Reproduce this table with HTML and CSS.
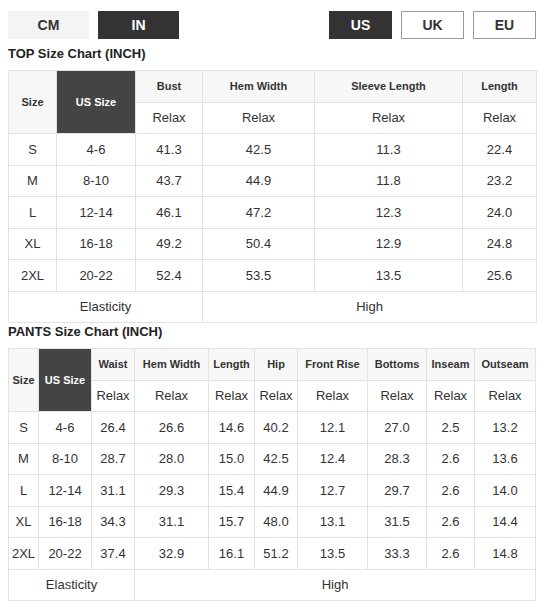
FILE: index.html
```html
<!DOCTYPE html>
<html lang="en">
<head>
    <meta charset="UTF-8" />
    <meta name="viewport" content="width=device-width, initial-scale=1" />
    <title>Size Chart</title>
    <link rel="stylesheet" href="styles.css">
</head>
<body>
    <div class="chart">
        <div class="toolbar">
            <div class="group">
                <button class="unit">CM</button>
                <button class="unit active">IN</button>
            </div>
            <div class="group">
                <button class="region active">US</button>
                <button class="region">UK</button>
                <button class="region">EU</button>
            </div>
        </div>

        <h3 class="chart-title first">TOP Size Chart (INCH)</h3>
        <table class="size-table top-table">
            <colgroup>
                <col style="width:48px"><col style="width:79px"><col style="width:67px">
                <col style="width:112px"><col style="width:148px"><col style="width:74px">
            </colgroup>
            <thead>
                <tr>
                    <th rowspan="2">Size</th>
                    <th rowspan="2" class="us">US Size</th>
                    <th>Bust</th>
                    <th>Hem Width</th>
                    <th>Sleeve Length</th>
                    <th>Length</th>
                </tr>
                <tr>
                    <td>Relax</td><td>Relax</td><td>Relax</td><td>Relax</td>
                </tr>
            </thead>
            <tbody>
                <tr><td>S</td><td>4-6</td><td>41.3</td><td>42.5</td><td>11.3</td><td>22.4</td></tr>
                <tr><td>M</td><td>8-10</td><td>43.7</td><td>44.9</td><td>11.8</td><td>23.2</td></tr>
                <tr><td>L</td><td>12-14</td><td>46.1</td><td>47.2</td><td>12.3</td><td>24.0</td></tr>
                <tr><td>XL</td><td>16-18</td><td>49.2</td><td>50.4</td><td>12.9</td><td>24.8</td></tr>
                <tr><td>2XL</td><td>20-22</td><td>52.4</td><td>53.5</td><td>13.5</td><td>25.6</td></tr>
                <tr><td colspan="3">Elasticity</td><td colspan="3">High</td></tr>
            </tbody>
        </table>

        <h3 class="chart-title">PANTS Size Chart (INCH)</h3>
        <table class="size-table pants-table">
            <colgroup>
                <col style="width:30px"><col style="width:53px"><col style="width:43px">
                <col style="width:74px"><col style="width:46px"><col style="width:43px">
                <col style="width:70px"><col style="width:59px"><col style="width:48px">
                <col style="width:61px">
            </colgroup>
            <thead>
                <tr>
                    <th rowspan="2">Size</th>
                    <th rowspan="2" class="us">US Size</th>
                    <th>Waist</th>
                    <th>Hem Width</th>
                    <th>Length</th>
                    <th>Hip</th>
                    <th>Front Rise</th>
                    <th>Bottoms</th>
                    <th>Inseam</th>
                    <th>Outseam</th>
                </tr>
                <tr>
                    <td>Relax</td><td>Relax</td><td>Relax</td><td>Relax</td>
                    <td>Relax</td><td>Relax</td><td>Relax</td><td>Relax</td>
                </tr>
            </thead>
            <tbody>
                <tr><td>S</td><td>4-6</td><td>26.4</td><td>26.6</td><td>14.6</td><td>40.2</td><td>12.1</td><td>27.0</td><td>2.5</td><td>13.2</td></tr>
                <tr><td>M</td><td>8-10</td><td>28.7</td><td>28.0</td><td>15.0</td><td>42.5</td><td>12.4</td><td>28.3</td><td>2.6</td><td>13.6</td></tr>
                <tr><td>L</td><td>12-14</td><td>31.1</td><td>29.3</td><td>15.4</td><td>44.9</td><td>12.7</td><td>29.7</td><td>2.6</td><td>14.0</td></tr>
                <tr><td>XL</td><td>16-18</td><td>34.3</td><td>31.1</td><td>15.7</td><td>48.0</td><td>13.1</td><td>31.5</td><td>2.6</td><td>14.4</td></tr>
                <tr><td>2XL</td><td>20-22</td><td>37.4</td><td>32.9</td><td>16.1</td><td>51.2</td><td>13.5</td><td>33.3</td><td>2.6</td><td>14.8</td></tr>
                <tr><td colspan="3">Elasticity</td><td colspan="7">High</td></tr>
            </tbody>
        </table>
    </div>
</body>
</html>
```

FILE: styles.css
```css
body {
    margin: 8px;
    font-family: "Liberation Sans", Arial, sans-serif;
    color: #333;
    background: #fff;
}
.chart {
    width: 528px;
    padding-top: 3px;
}
.toolbar {
    display: flex;
    justify-content: space-between;
    margin-bottom: 6px;
}
.group {
    display: flex;
    gap: 9px;
}
button {
    height: 28px;
    padding: 0;
    font-family: inherit;
    font-size: 14px;
    font-weight: bold;
    color: #333;
    border: none;
    background: #f4f4f4;
    cursor: pointer;
}
button.unit {
    width: 81px;
}
button.region {
    width: 63px;
    background: #fff;
    border: 1px solid #9a9a9a;
}
button.active,
button.region.active {
    background: #333;
    color: #fff;
    border: none;
}
.chart-title {
    margin: 0 0 7px;
    font-size: 13px;
    line-height: 18px;
    color: #222;
}
.size-table {
    border-collapse: collapse;
    table-layout: fixed;
    width: 528px;
}
.pants-table {
    width: 527px;
}
.size-table th,
.size-table td {
    height: 30.5px;
    padding: 0;
    border: 1px solid #e2e2e2;
    text-align: center;
    vertical-align: middle;
    font-size: 13px;
    color: #333;
}
.size-table th {
    font-size: 11px;
    font-weight: bold;
    background: #f7f7f7;
}
.size-table thead td {
    background: #fff;
}
.size-table th.us {
    background: #444;
    color: #fff;
}
```
